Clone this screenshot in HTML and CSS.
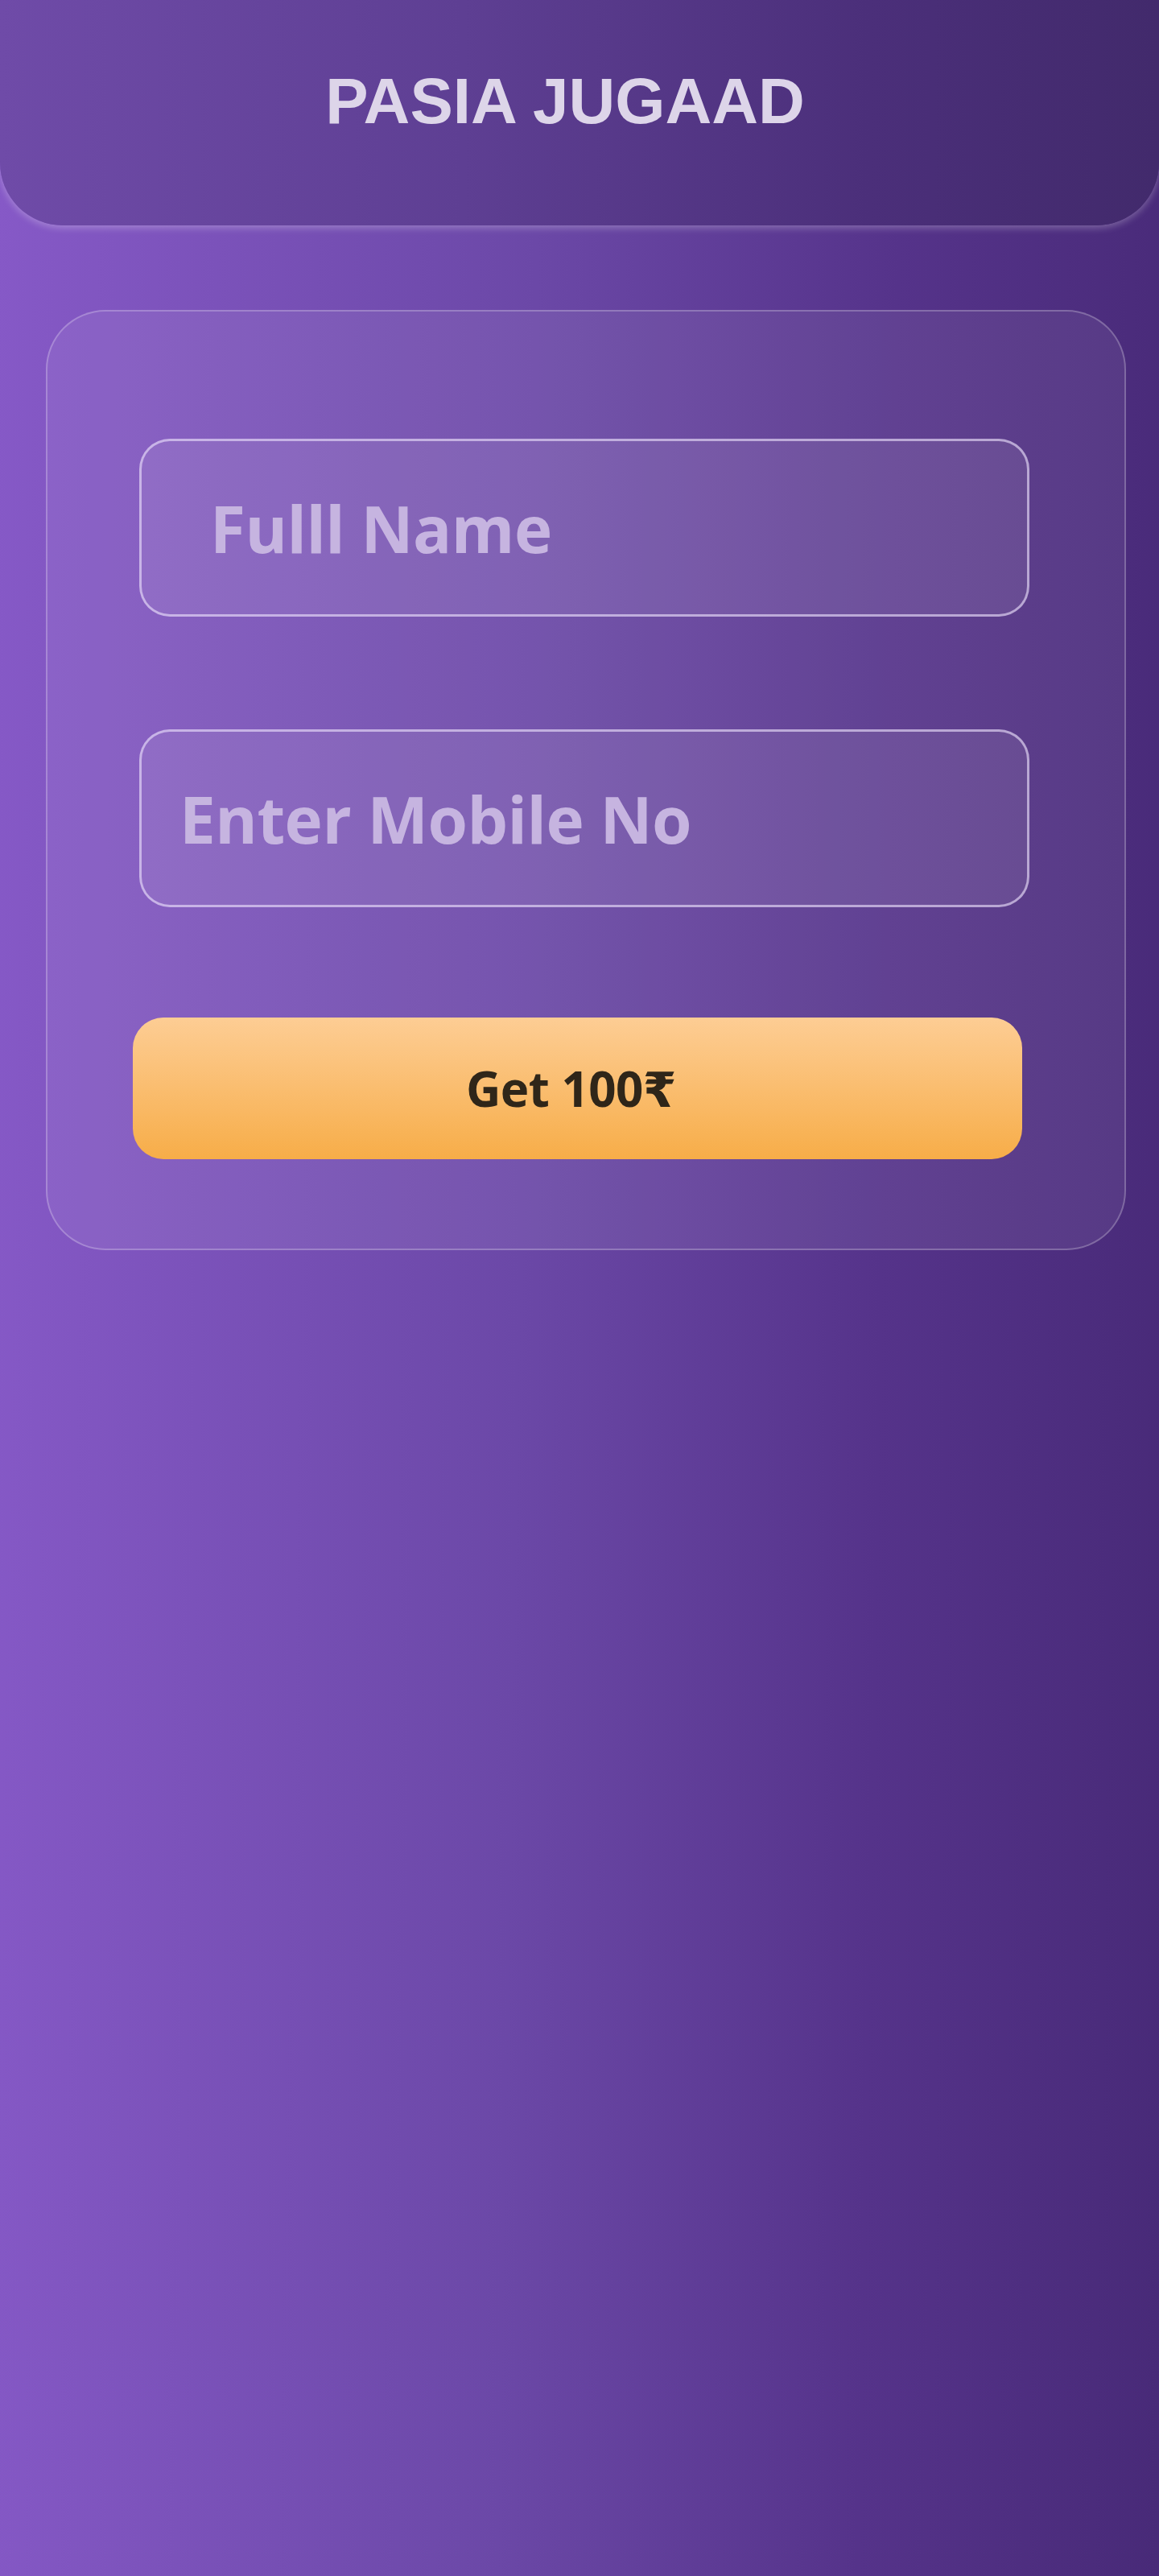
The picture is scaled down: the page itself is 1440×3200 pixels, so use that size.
FILE: index.html
```html
<!DOCTYPE html>
<html lang="en">
<head>
<meta charset="utf-8">
<title>PASIA JUGAAD</title>
<link rel="stylesheet" href="styles.css">
</head>
<body>
  <header class="top-bar">
    <h1 class="brand">PASIA JUGAAD</h1>
  </header>
  <main class="page">
    <form class="card">
      <input class="field field-name" type="text" placeholder="Fulll Name" aria-label="Fulll Name">
      <input class="field field-mobile" type="tel" placeholder="Enter Mobile No" aria-label="Enter Mobile No">
      <button class="cta" type="button">Get 100₹</button>
    </form>
  </main>
</body>
</html>
```

FILE: styles.css
```css
* {
  box-sizing: border-box;
}

html, body {
  margin: 0;
  padding: 0;
}

body {
  min-height: 3200px;
  background: linear-gradient(91deg, #8659c7 0%, #6b48a7 45%, #55338a 75%, #482a78 100%);
  font-family: "Open Sans", "Liberation Sans", sans-serif;
}

.top-bar {
  height: 280px;
  padding: 80px 36px 0 0;
  background: linear-gradient(90deg, #6f4ba8 0%, #5e3f93 40%, #4b2f7a 75%, #422a6c 100%);
  border-radius: 0 0 78px 78px;
  box-shadow: 0 3px 10px rgba(255, 255, 255, 0.28);
  position: relative;
  z-index: 1;
}

.brand {
  margin: 0;
  text-align: center;
  font-family: "Liberation Sans", Arial, sans-serif;
  font-weight: 700;
  font-size: 80px;
  line-height: 92px;
  letter-spacing: 0;
  color: #ddd5e9;
}

.page {
  padding-top: 105px;
}

.card {
  margin: 0 0 0 57px;
  width: 1342px;
  padding: 158px 0 111px 0;
  border: 2px solid rgba(255, 255, 255, 0.24);
  border-radius: 74px;
  background: rgba(255, 255, 255, 0.07);
  display: flex;
  flex-direction: column;
  align-items: flex-start;
}

.field {
  display: block;
  width: 1106px;
  height: 221px;
  margin-left: 114px;
  border: 3px solid rgba(235, 225, 250, 0.62);
  border-radius: 38px;
  background: rgba(225, 215, 240, 0.1);
  font-family: "Open Sans", "Liberation Sans", sans-serif;
  font-weight: 700;
  font-size: 80px;
  letter-spacing: -0.5px;
  color: #efe8f8;
  outline: none;
}

.field::placeholder {
  color: #c6b4e0;
  opacity: 1;
}

.field-name {
  padding: 0 0 0 85px;
}

.field-mobile {
  margin-top: 140px;
  padding: 0 0 0 47px;
}

.cta {
  margin: 137px 0 0 106px;
  width: 1105px;
  height: 176px;
  padding: 0 16px 0 0;
  border: none;
  border-radius: 38px;
  background: linear-gradient(180deg, #fdcd94 0%, #fabd6f 50%, #f7ad48 100%);
  font-family: "Open Sans", "DejaVu Sans", sans-serif;
  font-weight: 700;
  font-size: 60px;
  letter-spacing: -0.5px;
  color: #2f2619;
  cursor: pointer;
}
```
